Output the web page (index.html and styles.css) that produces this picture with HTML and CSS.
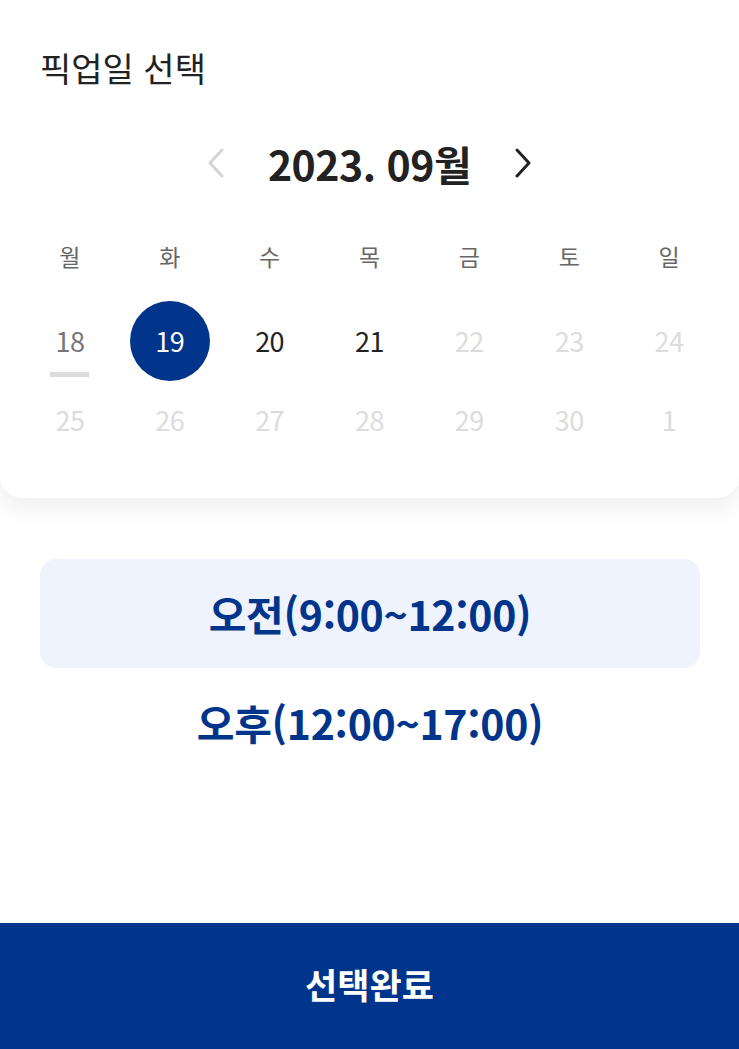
FILE: index.html
```html
<!DOCTYPE html>
<html lang="ko">
<head>
<meta charset="utf-8">
<title>픽업일 선택</title>
<link rel="stylesheet" href="styles.css">
</head>
<body>
<div class="sheet">
  <section class="card">
    <h1 class="title">픽업일 선택</h1>
    <div class="month">
      <button class="nav nav-prev" aria-label="이전 달">
        <svg width="20" height="30" viewBox="0 0 20 30"><path d="M16 2 L4 15 L16 28" fill="none" stroke="#d4d4d4" stroke-width="3" stroke-linecap="round" stroke-linejoin="round"/></svg>
      </button>
      <div class="month-label">2023. 09월</div>
      <button class="nav nav-next" aria-label="다음 달">
        <svg width="20" height="30" viewBox="0 0 20 30"><path d="M4 2 L16 15 L4 28" fill="none" stroke="#222" stroke-width="3" stroke-linecap="round" stroke-linejoin="round"/></svg>
      </button>
    </div>
    <div class="weekdays">
      <span>월</span><span>화</span><span>수</span><span>목</span><span>금</span><span>토</span><span>일</span>
    </div>
    <div class="dates">
      <span class="d today">18</span>
      <span class="d selected">19</span>
      <span class="d active">20</span>
      <span class="d active">21</span>
      <span class="d off">22</span>
      <span class="d off">23</span>
      <span class="d off">24</span>
      <span class="d off">25</span>
      <span class="d off">26</span>
      <span class="d off">27</span>
      <span class="d off">28</span>
      <span class="d off">29</span>
      <span class="d off">30</span>
      <span class="d off">1</span>
    </div>
  </section>
  <div class="options">
    <div class="option chosen">오전(9:00~12:00)</div>
    <div class="option">오후(12:00~17:00)</div>
  </div>
  <button class="confirm">선택완료</button>
</div>
</body>
</html>
```

FILE: styles.css
```css
* { box-sizing: border-box; }
html, body { margin: 0; padding: 0; }
body {
  background: #183c3b;
  font-family: "Noto Sans CJK KR", "Noto Sans", sans-serif;
  overflow: hidden;
}
.sheet {
  margin-top: -14px;
  height: calc(100vh + 14px);
  background: #fff;
  border-radius: 28px 28px 0 0;
  display: flex;
  flex-direction: column;
}
.card {
  background: #fff;
  border-radius: 0 0 22px 22px;
  box-shadow: 0 10px 24px rgba(0,0,0,0.07);
  padding: 62px 20px 39px;
  position: relative;
  z-index: 1;
}
.title {
  margin: 0 0 0 20px;
  font-size: 34px;
  line-height: 40px;
  font-weight: 400;
  color: #222;
}
.month {
  margin-top: 50px;
  height: 50px;
  display: flex;
  align-items: center;
  justify-content: center;
  gap: 42px;
}
.nav {
  border: 0;
  background: none;
  padding: 0;
  width: 20px;
  height: 30px;
  display: flex;
}
.month-label {
  font-size: 41px;
  font-weight: 700;
  color: #222;
  line-height: 50px;
  letter-spacing: -0.5px;
}
.weekdays {
  margin-top: 48px;
  display: grid;
  grid-template-columns: repeat(7, 1fr);
  height: 40px;
  align-items: center;
  text-align: center;
  font-size: 23px;
  color: #666;
}
.dates {
  margin-top: 25px;
  display: grid;
  grid-template-columns: repeat(7, 1fr);
  grid-auto-rows: 79px;
  align-items: center;
  justify-items: center;
  font-size: 27px;
}
.d {
  width: 80px;
  height: 80px;
  display: flex;
  align-items: center;
  justify-content: center;
  position: relative;
  letter-spacing: -0.5px;
}
.today { color: #777; }
.today::after {
  content: "";
  position: absolute;
  left: 50%;
  margin-left: -20px;
  bottom: 4px;
  width: 39px;
  height: 5px;
  background: #dcdcdc;
}
.selected {
  background: #00358b;
  color: #fff;
  border-radius: 50%;
}
.active { color: #222; }
.off { color: #dcdcdc; }
.options {
  margin-top: 61px;
  padding: 0 39px 0 40px;
  display: flex;
  flex-direction: column;
  gap: 0;
}
.option {
  height: 109px;
  display: flex;
  align-items: center;
  justify-content: center;
  font-size: 41px;
  font-weight: 700;
  color: #00358b;
  border-radius: 16px;
  letter-spacing: -0.3px;
  padding-bottom: 2px;
}
.option.chosen { background: #eef3fd; }
.confirm {
  margin-top: auto;
  height: 126px;
  border: 0;
  background: #00358b;
  color: #fff;
  font-family: inherit;
  font-size: 35px;
  font-weight: 700;
  width: 100%;
  padding: 0 0 6px;
}
```
